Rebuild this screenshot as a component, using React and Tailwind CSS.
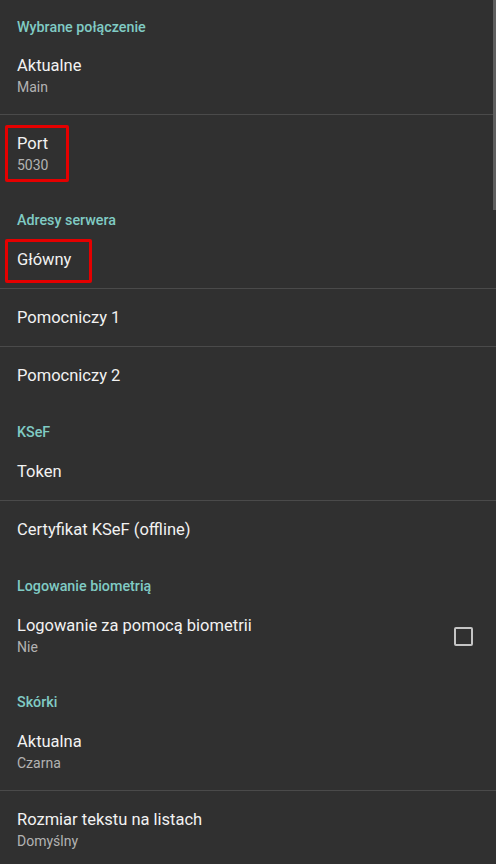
const Divider = () => <div className="h-px bg-[#4a4a4a]" />

function Header({ children, first }) {
  return (
    <div className={`${first ? 'pt-[17px] pb-0' : 'pt-[18px] pb-px'} px-[17px] text-[14.3px] leading-[20px] font-medium text-[#80cbc4]`}>
      {children}
    </div>
  )
}

function Item({ title, summary, highlight, checkbox }) {
  return (
    <div className="relative flex items-center pl-[17px] pr-[23px] pt-[18px] pb-[17px]">
      <div className="flex-1">
        <div className="text-[16.5px] leading-[22px] text-[#f2f2f2]">{title}</div>
        {summary && <div className="text-[14px] leading-[20px] text-[#b3b3b3]">{summary}</div>}
      </div>
      {checkbox && (
        <div className="w-[19px] h-[19px] rounded-[2px] border-2 border-[#c4c4c4]" />
      )}
      {highlight && (
        <div
          className={`absolute left-[5px] border-[3px] border-[#e50000] rounded-[2px] ${
            summary ? 'top-[10px] w-[64px] h-[57px]' : 'top-[8px] w-[87px] h-[44px]'
          }`}
        />
      )}
    </div>
  )
}

export default function App() {
  return (
    <div
      className="relative w-[496px] h-[864px] overflow-hidden bg-[#303030]"
      style={{ fontFamily: 'Roboto, "Liberation Sans", sans-serif' }}
    >
      <Header first>Wybrane połączenie</Header>
      <Item title="Aktualne" summary="Main" />
      <Divider />
      <Item title="Port" summary="5030" highlight />

      <Header>Adresy serwera</Header>
      <Item title="Główny" highlight />
      <Divider />
      <Item title="Pomocniczy 1" />
      <Divider />
      <Item title="Pomocniczy 2" />

      <Header>KSeF</Header>
      <Item title="Token" />
      <Divider />
      <Item title="Certyfikat KSeF (offline)" />

      <Header>Logowanie biometrią</Header>
      <Item title="Logowanie za pomocą biometrii" summary="Nie" checkbox />

      <Header>Skórki</Header>
      <Item title="Aktualna" summary="Czarna" />
      <Divider />
      <Item title="Rozmiar tekstu na listach" summary="Domyślny" />

      <div className="absolute right-0 top-0 w-[3px] h-[210px] bg-[#5e5e5e]" />
    </div>
  )
}
